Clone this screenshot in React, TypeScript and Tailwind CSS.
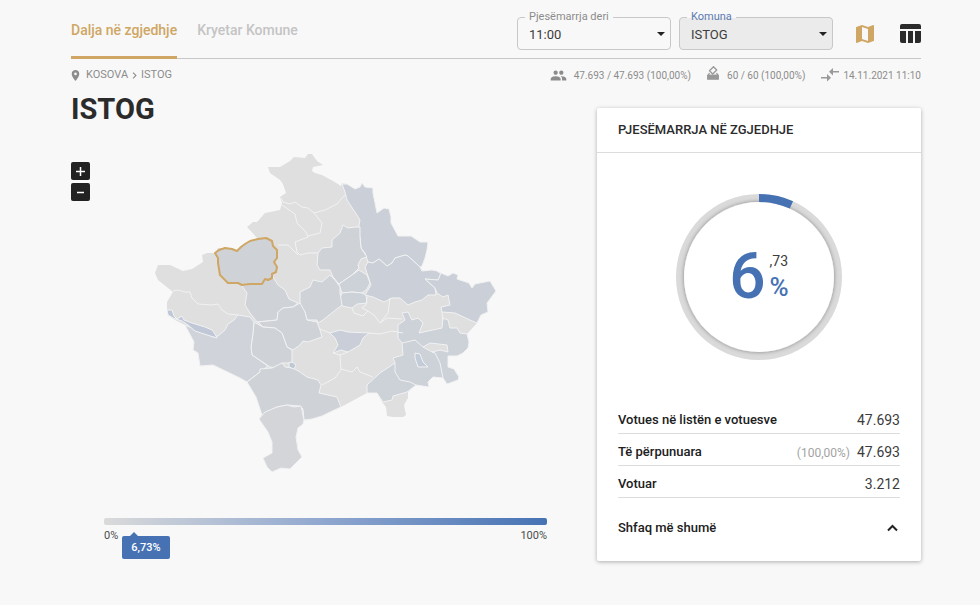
import React from "react";
import { MdPlace, MdChevronRight, MdPeople, MdMap } from "react-icons/md";

const OUTLINE =
  "268,167 280,167 290,161 294,157 305,158 308,154 312,154 317,161 323,165 313,167 312,171 315,173 322,175 333,181 341,186 342,183 347,184 355,189 360,187 362,183 365,187 373,188 373,193 377,213 384,208 389,209 391,217 391,223 398,236 411,236 420,242 428,242 427,250 425,258 422,266 420,267 422,271 432,270 437,271 441,273 448,276 453,273 458,275 457,279 469,283 472,288 475,284 490,281 496,291 487,303 488,312 481,315 477,323 467,334 469,342 468,348 463,353 458,353 457,356 448,356 448,367 454,369 459,377 458,380 447,384 443,378 433,377 428,382 429,387 425,384 416,385 408,392 408,398 404,405 406,415 403,417 393,417 387,416 386,407 382,402 377,393 367,393 341,407 328,413 322,416 312,419 304,420 303,424 298,428 296,437 298,447 298,450 302,457 290,469 281,468 272,472 267,467 263,458 272,453 272,442 268,432 259,419 262,415 256,397 247,382 240,378 213,365 200,366 198,353 193,350 194,342 185,325 175,320 168,315 167,310 167,302 173,292 158,280 155,273 158,265 170,265 183,271 192,269 203,262 202,255 207,253 215,253 218,248 232,248 237,252 250,241 258,239 247,227 253,222 257,222 265,213 280,210 282,203 280,197 286,193 283,184 280,180 270,173";

const ISTOG =
  "215,253 219,250 225,248 232,249 237,251 241,247 245,244 250,241 258,239 266,238 272,241 273,246 277,250 277,258 274,262 277,267 276,272 272,274 272,278 268,280 265,279 262,284 250,284 242,285 238,283 228,283 220,275 218,263 218,258";

const REGIONS: { fill: string; points: string }[] = [
  { fill: "#cbcfd7", points: "342,184 347,184 355,189 360,187 362,183 365,187 373,188 373,193 377,213 384,208 389,209 391,217 391,223 398,236 411,236 420,242 428,242 427,250 425,258 422,266 420,267 408,256 405,255 395,258 392,263 387,266 379,259 373,263 368,262 365,253 361,248 360,237 358,231 360,220 355,212 347,200 345,192" },
  { fill: "#cfd3d8", points: "360,227 355,227 348,228 343,225 340,233 332,240 332,247 322,248 318,253 317,265 320,270 330,270 333,277 339,284 352,275 359,268 358,265 361,259 367,257 361,248 360,237" },
  { fill: "#cdd1d8", points: "339,284 352,275 359,270 367,275 370,283 367,289 362,293 352,292 342,293" },
  { fill: "#cdd1d8", points: "342,293 352,292 362,293 366,295 367,303 357,304 352,308 342,306 340,298" },
  { fill: "#cbcfd7", points: "368,262 373,263 379,259 387,266 392,263 395,258 405,255 408,256 420,267 422,271 432,270 437,271 441,274 438,280 425,279 435,288 436,295 428,295 422,300 415,302 408,305 400,298 392,298 384,302 373,297 365,295 371,285 367,273 365,267" },
  { fill: "#cbcfd7", points: "441,273 448,276 453,273 458,275 457,279 469,283 472,288 475,284 490,281 496,291 487,303 488,312 481,315 477,323 470,320 455,313 442,312 441,307 450,305 448,295 443,297 437,293 435,288 425,279 438,280" },
  { fill: "#cfd3d8", points: "300,292 310,287 313,280 322,282 330,275 335,280 340,287 340,293 342,305 333,312 323,320 318,323 317,320 307,320 305,312 300,305" },
  { fill: "#cfd3d8", points: "242,286 250,284 262,284 265,279 273,277 278,285 285,290 289,299 298,303 293,307 283,308 278,312 277,320 257,322 250,313 245,305 247,293" },
  { fill: "#cfd3d8", points: "258,322 277,320 278,312 283,308 293,307 300,303 305,312 307,320 317,322 320,330 322,337 308,342 303,341 300,345 293,350 287,347 282,333 275,328 263,327" },
  { fill: "#cfd3d8", points: "254,322 263,327 275,328 282,333 287,347 292,350 292,362 288,363 282,363 278,368 270,367 252,355 251,347 253,333" },
  { fill: "#d0d3d9", points: "238,315 250,317 254,322 253,333 251,347 252,355 268,366 260,372 247,382 240,378 213,365 200,366 198,353 193,350 194,342 185,325 213,337 218,336 225,330 228,324 234,320" },
  { fill: "#c0c8d7", points: "167,310 172,310 174,316 177,319 182,316 184,320 192,323 205,327 212,330 215,334 217,338 207,335 195,331 188,325 182,321 173,318 168,315" },
  { fill: "#cfd3d7", points: "247,382 260,372 260,369 272,368 282,363 285,367 293,368 300,372 307,377 318,380 321,385 319,393 337,397 341,407 328,413 322,416 312,419 304,420 303,409 300,406 287,405 277,407 260,416 262,415 256,397" },
  { fill: "#d3d5d9", points: "259,419 265,412 277,407 287,405 294,407 301,406 304,420 303,424 298,428 296,437 298,450 302,457 290,469 281,468 272,472 267,467 263,458 272,453 272,442 268,432" },
  { fill: "#cdd1d8", points: "402,313 408,312 412,320 418,318 423,323 419,333 442,328 443,318 448,320 450,328 457,328 460,333 467,334 469,342 468,348 463,353 457,356 448,356 448,367 454,369 459,377 458,380 447,384 443,378 433,377 428,382 429,387 416,385 407,392 393,396 392,400 383,402 377,393 367,393 367,385 380,373 395,363 393,358 403,355 402,343 398,338 398,325 405,320" },
  { fill: "#dfdfdf", points: "423,347 430,343 447,345 448,352 440,350 432,352" },
  { fill: "#c9ced9", points: "330,333 340,330 348,332 369,333 363,338 360,345 348,352 341,350 333,353 338,345 335,338" },
  { fill: "#c5ccd9", points: "415,353 420,354 423,362 428,367 418,367 415,358" },
  { fill: "#bfc9d6", points: "289,363 292,362 296,365 294,369 289,367" },
];

const BORDERS: string[] = [
  "173,291 178,290 185,292 190,292 192,298 198,304 212,305 218,304 222,310 228,314 238,315",
  "281,198 283,202 290,204 295,202 302,207 308,208 314,213 325,210 337,204 342,198 345,195",
  "282,205 295,214 297,223 306,232 308,237 295,242 297,252 300,255 308,253 318,253",
  "314,213 322,223 320,233 308,236",
  "278,245 288,245 293,250 298,255",
  "352,308 354,313 363,316 368,311 374,315 380,323 387,318 402,319",
  "367,297 366,305 362,308 368,311",
  "390,298 388,313 380,323",
  "320,329 330,333",
  "369,333 380,334 392,331 403,333",
  "333,353 340,355 341,370 335,378 322,385",
  "348,352 340,355",
  "341,369 352,372 357,367 360,372 373,377",
  "402,343 415,340 423,347",
  "432,352 435,353 440,363 443,378",
  "395,363 395,372 400,380 410,382 416,385",
  "442,312 443,320",
];

function KosovoMap() {
  return (
    <svg viewBox="150 150 350 325" className="block w-[350px] max-w-full" role="img" aria-label="Harta e komunave të Kosovës">
      <polygon points={OUTLINE} fill="#dfdfdf" />
      <g stroke="#f1f2f3" strokeWidth="1" strokeLinejoin="round">
        {REGIONS.map((r) => (
          <polygon key={r.points} points={r.points} fill={r.fill} />
        ))}
        {BORDERS.map((b) => (
          <polyline key={b} points={b} fill="none" />
        ))}
      </g>
      <polygon points={ISTOG} fill="#cfd3d8" stroke="#cfa663" strokeWidth="2" strokeLinejoin="round" />
    </svg>
  );
}

function SelectField({ id, label, value, active = false }: { id: string; label: string; value: string; active?: boolean }) {
  return (
    <div className="relative w-[154px]">
      <select
        id={id}
        defaultValue={value}
        className={`block h-[33px] w-full appearance-none rounded border border-[#c8c8c8] pt-0.5 pl-[11px] text-[13px] text-[#3c3c3c] outline-none ${active ? "bg-[#ebebeb]" : "bg-[#f8f8f8]"}`}
      >
        <option>{value}</option>
      </select>
      <label
        htmlFor={id}
        className={`absolute -top-2 left-2 bg-linear-to-b from-[#f8f8f8] from-55% to-55% px-1 text-[11px] leading-4 ${active ? "to-[#ebebeb] text-[#5b7bb0]" : "to-[#f8f8f8] text-[#8c8c8c]"}`}
      >
        {label}
      </label>
      <svg viewBox="0 0 8 4" className="pointer-events-none absolute top-[15px] right-[6px] h-1 w-2" aria-hidden="true">
        <path d="M0 0h8L4 4z" fill="#222" />
      </svg>
    </div>
  );
}

function TableIcon() {
  return (
    <svg viewBox="0 0 21 19" className="h-[19px] w-[21px]" fill="#2b2b2b" aria-hidden="true">
      <path d="M2 0h17a2 2 0 0 1 2 2v3H0V2a2 2 0 0 1 2-2zM0 7h6v12H2a2 2 0 0 1-2-2zM8 7h5v12H8zM15 7h6v10a2 2 0 0 1-2 2h-4z" />
    </svg>
  );
}

function BallotIcon() {
  return (
    <svg viewBox="0 0 12 14" className="-mt-1 h-[14px] w-3" fill="none" stroke="#999" strokeWidth="1.3" strokeLinejoin="round" aria-hidden="true">
      <path d="M6.500 .8l3.200 3.200-4 4L2.500 4.800z" />
      <path d="M2.500 7L.8 9.500h10.400L9.500 7" />
      <path d="M.7 9.500h10.600v3.700H.7z" fill="#999" />
    </svg>
  );
}

function ArrowsIcon() {
  return (
    <svg viewBox="0 0 18 14" className="h-[14px] w-[18px]" fill="#999" aria-hidden="true">
      <path d="M6 6l4 3.700L6 13.400V10.500H0V9h6zM12 0v3h6v1.500h-6v3L8 3.700z" />
    </svg>
  );
}

function Donut() {
  const circumference = 2 * Math.PI * 79;
  return (
    <div className="relative h-[168px] w-[168px]">
      <svg viewBox="0 0 168 168" className="h-full w-full" aria-hidden="true">
        <defs>
          <filter id="ring" x="-10%" y="-10%" width="120%" height="120%">
            <feDropShadow dx="0" dy="0" stdDeviation="2" floodColor="#000" floodOpacity="0.4" />
          </filter>
        </defs>
        <circle cx="84" cy="84" r="83" fill="#dadada" />
        <circle cx="84" cy="84" r="75" fill="#fff" filter="url(#ring)" />
        <circle cx="84" cy="84" r="79" fill="none" stroke="#4672b4" strokeWidth="8" strokeDasharray={`${circumference * 0.0673} ${circumference}`} transform="rotate(-90 84 84)" />
      </svg>
      <div className="absolute inset-0 flex items-center justify-center gap-1 text-[#4672b4]">
        <span className="text-[64px] leading-[66px] font-medium">6</span>
        <span className="flex flex-col pb-1">
          <span className="text-sm leading-6 text-[#3c3c3c]">,73</span>
          <span className="text-[26px] leading-7 font-medium">%</span>
        </span>
      </div>
    </div>
  );
}

function Row({ label, value, note }: { label: string; value: string; note?: string }) {
  return (
    <div className="flex h-8 items-center justify-between border-b border-[#dcdcdc] pt-1">
      <dt className="text-[13px] font-medium text-[#202020]">{label}</dt>
      <dd className="flex items-baseline gap-[7px] text-sm text-[#3c3c3c]">
        {note && <span className="text-xs text-[#a3a3a3]">{note}</span>}
        {value}
      </dd>
    </div>
  );
}

export default function App() {
  return (
    <div className="min-h-screen bg-[#f8f8f8] pr-[59px] pb-11 pl-[71px] font-['Roboto',sans-serif] text-[#2b2b2b]">
      <header className="flex h-[59px] items-stretch justify-between border-b border-[#c8c8c8]">
        <nav className="-mb-px flex gap-5 text-sm font-medium">
          <a href="#dalja" className="flex border-b-[3px] border-[#cfa663] pt-5 leading-5 text-[#cfa663]">Dalja në zgjedhje</a>
          <a href="#kryetar" className="pt-5 leading-5 text-[#c4c4c4]">Kryetar Komune</a>
        </nav>
        <div className="flex pt-[17px]">
          <div className="flex gap-2">
            <SelectField id="koha" label="Pjesëmarrja deri" value="11:00" />
            <SelectField id="komuna" label="Komuna" value="ISTOG" active />
          </div>
          <div className="ml-5 flex h-[33px] items-center gap-[23px]">
            <button type="button" aria-label="Harta" className="text-[24px] text-[#cfa663]"><MdMap /></button>
            <button type="button" aria-label="Tabela"><TableIcon /></button>
          </div>
        </div>
      </header>

      <div className="flex h-8 items-center justify-between text-[11px] text-[#8c8c8c]">
        <nav className="flex items-center" aria-label="Vendndodhja">
          <MdPlace className="-ml-0.5 text-[13px]" />
          <a href="#kosova" className="ml-1">KOSOVA</a>
          <MdChevronRight className="text-[13px]" />
          <span>ISTOG</span>
        </nav>
        <div className="flex items-center gap-4 text-[10px]">
          <span className="flex items-center gap-[7px]"><MdPeople className="text-[17px]" />47.693 / 47.693 (100,00%)</span>
          <span className="flex items-center gap-2"><BallotIcon />60 / 60 (100,00%)</span>
          <span className="flex items-center gap-1"><ArrowsIcon />14.11.2021 11:10</span>
        </div>
      </div>

      <main className="flex gap-[50px]">
        <section className="min-w-0 flex-1">
          <h1 className="text-[29px] leading-9 font-bold">ISTOG</h1>
          <div className="mt-[23px] flex items-start">
            <div className="mt-3 flex w-[19px] shrink-0 flex-col gap-[3px]">
              <button type="button" aria-label="Zmadho" className="flex h-[18px] items-center justify-center rounded-xs bg-[#222] text-white">
                <svg viewBox="0 0 9 9" className="h-[9px] w-[9px]" aria-hidden="true"><path d="M0 4.500h9M4.500 0v9" stroke="currentColor" strokeWidth="1.500" /></svg>
              </button>
              <button type="button" aria-label="Zvogëlo" className="flex h-[18px] items-center justify-center rounded-xs bg-[#222] text-white">
                <svg viewBox="0 0 9 9" className="h-[9px] w-[9px]" aria-hidden="true"><path d="M1 4.500h7" stroke="currentColor" strokeWidth="1.500" /></svg>
              </button>
            </div>
            <div className="ml-[60px] min-w-0">
              <KosovoMap />
            </div>
          </div>
          <div className="mt-[43px] ml-[33px]">
            <div className="h-[7px] rounded-xs bg-linear-to-r from-[#dadada] via-[#8fa7cf] to-[#4672b4]" />
            <div className="relative mt-[3px] flex justify-between text-[11px] leading-4 text-[#4c4c4c]">
              <span>0%</span>
              <span>100%</span>
              <div className="absolute top-2 left-[18px] flex h-[23px] w-12 items-center justify-center rounded-xs bg-[#4672b4] font-medium text-white">
                <span className="absolute -top-1 left-2 border-x-4 border-b-4 border-x-transparent border-b-[#4672b4]" />
                6,73%
              </div>
            </div>
          </div>
        </section>

        <section className="mt-[17px] w-[324px] shrink-0 self-start rounded-xs bg-white shadow-[0_1px_4px_rgba(0,0,0,0.3)]">
          <h2 className="flex h-[45px] items-center border-b border-[#dcdcdc] px-[21px] text-[13px] font-medium">PJESËMARRJA NË ZGJEDHJE</h2>
          <div className="px-[21px] pt-10 pb-[21px]">
            <div className="flex justify-center">
              <Donut />
            </div>
            <dl className="mt-[41px]">
              <Row label="Votues në listën e votuesve" value="47.693" />
              <Row label="Të përpunuara" note="(100,00%)" value="47.693" />
              <Row label="Votuar" value="3.212" />
            </dl>
            <button type="button" className="mt-[18px] flex h-6 w-full items-center justify-between text-[13px] font-medium text-[#202020]">
              Shfaq më shumë
              <svg viewBox="0 0 16 16" className="h-4 w-4" fill="none" stroke="#222" strokeWidth="2" aria-hidden="true"><path d="M4 10.500l4.500-4.500 4.500 4.500" /></svg>
            </button>
          </div>
        </section>
      </main>
    </div>
  );
}
